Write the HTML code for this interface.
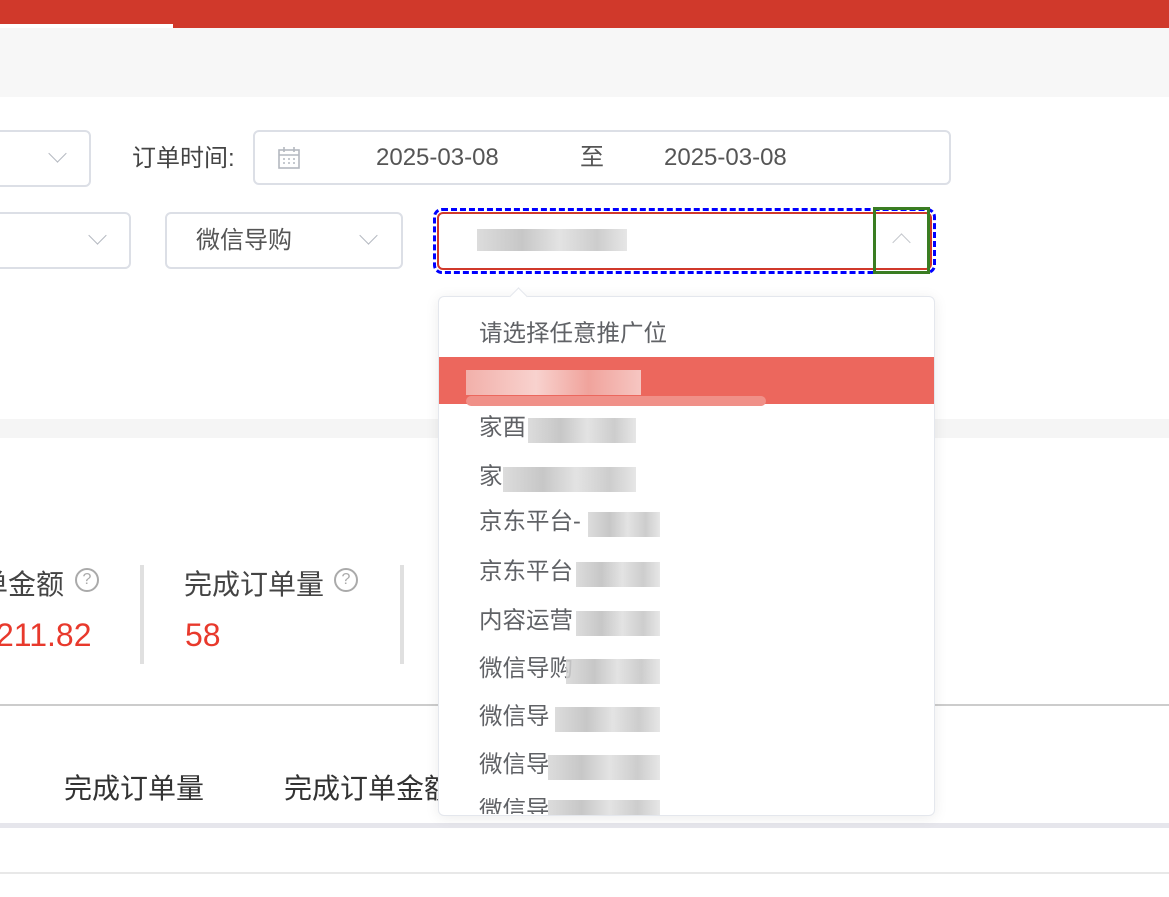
<!DOCTYPE html>
<html><head><meta charset="utf-8"><style>
*{margin:0;padding:0;box-sizing:border-box}
body{width:1169px;height:897px;position:relative;overflow:hidden;background:#fff;font-family:"Liberation Sans","Noto Sans CJK SC",sans-serif;color:#555}
.a{position:absolute}
.box{position:absolute;border:2px solid #dcdfe6;border-radius:6px;background:#fff}
.t{position:absolute;white-space:nowrap;line-height:1}
.chev{position:absolute;width:13px;height:13px;border-right:1.6px solid #b4b8c0;border-bottom:1.6px solid #b4b8c0;transform:rotate(45deg)}
.it{position:absolute;left:479px;font-size:23.5px;color:#606266;white-space:nowrap;line-height:1}
.blur{position:absolute;background:linear-gradient(90deg,#d6d6d6,#bdbdbd 30%,#dedede 55%,#c4c4c4 80%,#e2e2e2);opacity:.85}
.q{position:absolute;width:24px;height:24px;border:2px solid #aaa;border-radius:50%;font-size:16px;color:#aaa;text-align:center;line-height:20px}
</style></head><body>
<div class="a" style="left:0;top:0;width:1169px;height:28px;background:#d0392b"></div>
<div class="a" style="left:0;top:24px;width:173px;height:4px;background:#fff"></div>
<div class="a" style="left:0;top:28px;width:1169px;height:69px;background:#f7f7f7"></div>

<div class="box" style="left:-10px;top:130px;width:101px;height:57px"></div>
<div class="chev" style="left:51px;top:147px"></div>
<div class="t" style="left:132px;top:147px;font-size:24px;color:#444">订单时间:</div>
<div class="box" style="left:253px;top:130px;width:698px;height:55px"></div>
<svg class="a" style="left:277px;top:146px" width="24" height="24" viewBox="0 0 24 24" fill="none" stroke="#b4b8c0" stroke-width="1.6"><rect x="2" y="4" width="20" height="18"/><path d="M2 9h20M7 1v5M17 1v5M6 13h2M11 13h2M16 13h2M6 17h2M11 17h2M16 17h2"/></svg>
<div class="t" style="left:376px;top:146px;font-size:24px;color:#555">2025-03-08</div>
<div class="t" style="left:580px;top:146px;font-size:24px;color:#555">至</div>
<div class="t" style="left:664px;top:146px;font-size:24px;color:#555">2025-03-08</div>

<div class="box" style="left:-10px;top:212px;width:141px;height:57px"></div>
<div class="chev" style="left:91px;top:229px"></div>
<div class="box" style="left:165px;top:212px;width:238px;height:57px"></div>
<div class="t" style="left:196px;top:229px;font-size:24px;color:#555">微信导购</div>
<div class="chev" style="left:362px;top:229px"></div>

<div class="a" style="left:433px;top:208px;width:503px;height:66px;border:3px dashed #0000ff;border-radius:9px"></div>
<div class="a" style="left:437px;top:212px;width:495px;height:58px;border:2px solid #d0392b;border-radius:6px;background:#fff"></div>
<div class="blur" style="left:477px;top:229px;width:150px;height:22px"></div>
<div class="a" style="left:873px;top:207px;width:57px;height:67px;border:3px solid #3a7d22"></div>
<div class="chev" style="left:895px;top:236px;transform:rotate(225deg);border-color:#c4c7cc"></div>

<div class="a" style="left:0;top:419px;width:1169px;height:19px;background:#f5f5f5"></div>

<div class="t" style="left:-20px;top:571px;font-size:28px;color:#444">单金额</div>
<div class="q" style="left:75px;top:568px">?</div>
<div class="t" style="left:-4px;top:619px;font-size:32px;color:#e8392c">211.82</div>
<div class="a" style="left:140px;top:565px;width:4px;height:99px;background:#e0e0e0"></div>
<div class="t" style="left:184px;top:571px;font-size:28px;color:#444">完成订单量</div>
<div class="q" style="left:334px;top:568px">?</div>
<div class="t" style="left:185px;top:619px;font-size:32px;color:#e8392c">58</div>
<div class="a" style="left:400px;top:565px;width:4px;height:99px;background:#e0e0e0"></div>

<div class="a" style="left:0;top:704px;width:1169px;height:2px;background:#ccc"></div>
<div class="t" style="left:64px;top:775px;font-size:28px;color:#333">完成订单量</div>
<div class="t" style="left:284px;top:775px;font-size:28px;color:#333">完成订单金额</div>
<div class="a" style="left:0;top:823px;width:1169px;height:5px;background:#e6e6ec"></div>
<div class="a" style="left:0;top:872px;width:1169px;height:2px;background:#e8e8e8"></div>

<div class="a" style="left:438px;top:296px;width:497px;height:520px;border:1px solid #e4e7ed;border-radius:6px;background:#fff;box-shadow:0 2px 14px rgba(0,0,0,.08);overflow:hidden">
</div>
<div class="a" style="left:512px;top:290px;width:13px;height:13px;background:#fff;border-left:1px solid #e4e7ed;border-top:1px solid #e4e7ed;transform:rotate(45deg)"></div>
<div class="it" style="top:322px">请选择任意推广位</div>
<div class="a" style="left:439px;top:357px;width:495px;height:47px;background:#ec675d"></div>
<div class="a" style="left:466px;top:370px;width:175px;height:25px;background:linear-gradient(90deg,#f2b0aa,#f8d2ce 40%,#f0a39c 70%,#f6c6c2)"></div>
<div class="a" style="left:466px;top:396px;width:300px;height:10px;background:#f09088;border-radius:5px"></div>
<div class="it" style="top:416px">家酉</div><div class="blur" style="left:528px;top:418px;width:108px;height:25px"></div>
<div class="it" style="top:465px">家</div><div class="blur" style="left:503px;top:467px;width:133px;height:25px"></div>
<div class="it" style="top:510px">京东平台-</div><div class="blur" style="left:588px;top:512px;width:72px;height:25px"></div>
<div class="it" style="top:560px">京东平台</div><div class="blur" style="left:576px;top:562px;width:84px;height:25px"></div>
<div class="it" style="top:609px">内容运营</div><div class="blur" style="left:576px;top:611px;width:84px;height:25px"></div>
<div class="it" style="top:657px">微信导购</div><div class="blur" style="left:566px;top:659px;width:94px;height:25px"></div>
<div class="it" style="top:705px">微信导</div><div class="blur" style="left:555px;top:707px;width:105px;height:25px"></div>
<div class="it" style="top:753px">微信导</div><div class="blur" style="left:548px;top:755px;width:112px;height:25px"></div>
<div class="it" style="top:798px;height:16px;overflow:hidden">微信导</div><div class="blur" style="left:548px;top:800px;width:112px;height:15px"></div>
</body></html>
